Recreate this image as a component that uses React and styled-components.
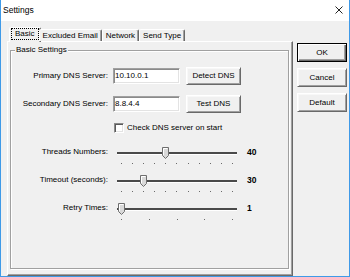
import React from "react";
import styled, { createGlobalStyle } from "styled-components";

const GlobalStyle = createGlobalStyle`
  html, body {
    margin: 0;
    padding: 0;
    background: #fff;
  }
  body {
    font-family: "Liberation Sans", Arial, sans-serif;
    color: #000;
  }
  * {
    box-sizing: border-box;
  }
`;

const Window = styled.div`
  width: 350px;
  height: 277px;
  display: flex;
  flex-direction: column;
  border: 1px solid #3f9ae8;
  border-top: none;
  background: #f0f0f0;
  overflow: hidden;
`;

const TitleBar = styled.div`
  height: 21px;
  flex: none;
  display: flex;
  align-items: center;
  justify-content: space-between;
  padding: 0 6px 2px 2px;
  background: #fff;
  font-size: 8.5px;
`;

const Client = styled.div`
  flex: 1;
  min-height: 0;
  display: flex;
  padding: 6px 0 0 6px;
`;

const TabArea = styled.div`
  width: 286px;
  display: flex;
  flex-direction: column;
`;

const TabStrip = styled.div`
  height: 14px;
  flex: none;
  display: flex;
  align-items: flex-end;
  padding-left: 4px;
  position: relative;
  z-index: 1;
`;

const Tab = styled.div`
  height: ${(p) => (p.$active ? 15 : 12)}px;
  margin: 0 ${(p) => (p.$active ? -2 : 0)}px ${(p) => (p.$active ? -1 : 0)}px;
  padding: ${(p) => (p.$active ? "0 1px" : "1px 3px 0")};
  display: flex;
  align-items: flex-start;
  border: 1px solid;
  border-bottom: none;
  border-color: #fff #696969 transparent #fff;
  box-shadow: inset -1px 0 #a0a0a0;
  border-radius: 2px 2px 0 0;
  background: #f0f0f0;
  font-size: 8px;
  line-height: 10px;
  white-space: nowrap;
`;

const FocusBox = styled.span`
  height: 12px;
  padding: 0 3px;
  border: 1px dotted #000;
  line-height: 10px;
`;

const Panel = styled.div`
  flex: 1;
  display: flex;
  padding: 8px 3px 6px 2px;
  border: 1px solid;
  border-color: #fff #696969 #696969 #fff;
  box-shadow: inset -1px -1px #a0a0a0;
`;

const GroupBox = styled.div`
  flex: 1;
  position: relative;
  display: flex;
  flex-direction: column;
  padding: 15px 0 0 1px;
  border: 1px solid #a0a0a0;
  box-shadow: inset 1px 1px #fff, 1px 1px #fff;
`;

const GroupTitle = styled.span`
  position: absolute;
  top: -6px;
  left: 4px;
  padding: 0 1px;
  background: #f0f0f0;
  font-size: 8px;
  line-height: 10px;
`;

const Row = styled.div`
  display: flex;
  align-items: ${(p) => (p.$top ? "flex-start" : "center")};
  height: ${(p) => p.$h}px;
  margin-top: ${(p) => p.$gap || 0}px;
  flex: none;
`;

const Label = styled.span`
  width: 96px;
  flex: none;
  margin-right: 5px;
  text-align: right;
  font-size: 8px;
  line-height: 12px;
  white-space: nowrap;
`;

const TextBox = styled.input`
  width: 67px;
  height: 16px;
  padding: 0 0 0 1px;
  margin: 0;
  border: 1px solid;
  border-color: #a0a0a0 #fff #fff #a0a0a0;
  box-shadow: inset 1px 1px #8a8a8a, inset -1px -1px #e3e3e3;
  background: #fff;
  font-family: "Liberation Sans", Arial, sans-serif;
  font-size: 8px;
  color: #000;
  outline: none;
`;

const Button = styled.button`
  width: ${(p) => p.$w}px;
  height: ${(p) => p.$hgt}px;
  margin: 0;
  margin-left: ${(p) => p.$ml || 0}px;
  padding: 0;
  border: 1px solid;
  border-color: ${(p) => (p.$default ? "#000" : "#fff #696969 #696969 #fff")};
  box-shadow: ${(p) =>
    p.$default
      ? "inset 1px 1px #fff, inset -1px -1px #696969, inset -2px -2px #a0a0a0"
      : "inset 1px 1px #f8f8f8, inset -1px -1px #a0a0a0"};
  background: #f0f0f0;
  font-family: "Liberation Sans", Arial, sans-serif;
  font-size: 8px;
  color: #000;
`;

const CheckBox = styled.span`
  width: 10px;
  height: 10px;
  margin: 0 3px 0 1px;
  flex: none;
  border: 1px solid;
  border-color: #8a8a8a #fff #fff #8a8a8a;
  box-shadow: inset 1px 1px #5a5a5a, inset -1px -1px #e3e3e3;
  background: #fff;
`;

const CheckText = styled.span`
  font-size: 8px;
  line-height: 11px;
`;

const Slider = styled.div`
  position: relative;
  width: 127px;
  height: 20px;
  flex: none;
`;

const Track = styled.div`
  height: 2px;
  margin: 6px 3px 0 4px;
  background: #4a4a4a;
  box-shadow: 0 1px #fff;
`;

const Ticks = styled.div`
  display: flex;
  justify-content: space-between;
  margin: 9px 7px 0 8px;
`;

const Tick = styled.span`
  width: 1px;
  height: 1px;
  background: #6a6a6a;
`;

const ThumbWrap = styled.div`
  position: absolute;
  top: 1px;
  width: 7px;
  height: 12px;
  display: flex;
`;

const Value = styled.span`
  margin-left: 7px;
  font-size: 8.5px;
  font-weight: bold;
  line-height: 12px;
`;

const ButtonColumn = styled.div`
  display: flex;
  flex-direction: column;
  gap: 6px;
  margin: 16px 0 0 4px;
`;

const CloseIcon = () => (
  <svg width="8" height="8" viewBox="0 0 8 8">
    <path d="M0.5 0.5 L7.5 7.5 M7.5 0.5 L0.5 7.5" stroke="#222" strokeWidth="1" />
  </svg>
);

const Thumb = () => (
  <svg width="7" height="12" viewBox="0 0 7 12">
    <path d="M0.5 0.5 H6.5 V8.5 L3.5 11.5 L0.5 8.5 Z" fill="#d9d9d9" stroke="#6e6e6e" />
    <path d="M1.5 8 V1.5 H5.5" fill="none" stroke="#fff" />
  </svg>
);

const TrackSlider = ({ label, value, min, max, ticks, gap }) => {
  const frac = (value - min) / (max - min);
  const left = Math.round(8 + frac * 111 - 3);
  return (
    <Row $h={20} $top $gap={gap}>
      <Label>{label}</Label>
      <Slider>
        <Track />
        <Ticks>
          {Array.from({ length: ticks }).map((_, i) => (
            <Tick key={i} />
          ))}
        </Ticks>
        <ThumbWrap style={{ left }}>
          <Thumb />
        </ThumbWrap>
      </Slider>
      <Value>{value}</Value>
    </Row>
  );
};

const tabs = ["Basic", "Excluded Email", "Network", "Send Type"];

const App = () => {
  return (
    <>
      <GlobalStyle />
      <Window>
        <TitleBar>
          <span>Settings</span>
          <CloseIcon />
        </TitleBar>
        <Client>
          <TabArea>
            <TabStrip>
              {tabs.map((t, i) =>
                i === 0 ? (
                  <Tab key={t} $active>
                    <FocusBox>{t}</FocusBox>
                  </Tab>
                ) : (
                  <Tab key={t}>{t}</Tab>
                )
              )}
            </TabStrip>
            <Panel>
              <GroupBox>
                <GroupTitle>Basic Settings</GroupTitle>
                <Row $h={19}>
                  <Label>Primary DNS Server:</Label>
                  <TextBox defaultValue="10.10.0.1" />
                  <Button $w={55} $hgt={18} $ml={6}>
                    Detect DNS
                  </Button>
                </Row>
                <Row $h={19} $gap={9}>
                  <Label>Secondary DNS Server:</Label>
                  <TextBox defaultValue="8.8.4.4" />
                  <Button $w={55} $hgt={18} $ml={6}>
                    Test DNS
                  </Button>
                </Row>
                <Row $h={11} $gap={9}>
                  <Label />
                  <CheckBox />
                  <CheckText>Check DNS server on start</CheckText>
                </Row>
                <TrackSlider label="Threads Numbers:" value={40} min={0} max={100} ticks={11} gap={13} />
                <TrackSlider label="Timeout (seconds):" value={30} min={10} max={110} ticks={11} gap={8} />
                <TrackSlider label="Retry Times:" value={1} min={1} max={5} ticks={5} gap={8} />
              </GroupBox>
            </Panel>
          </TabArea>
          <ButtonColumn>
            <Button $w={50} $hgt={19} $default>
              OK
            </Button>
            <Button $w={50} $hgt={19}>
              Cancel
            </Button>
            <Button $w={50} $hgt={19}>
              Default
            </Button>
          </ButtonColumn>
        </Client>
      </Window>
    </>
  );
};

export default App;
